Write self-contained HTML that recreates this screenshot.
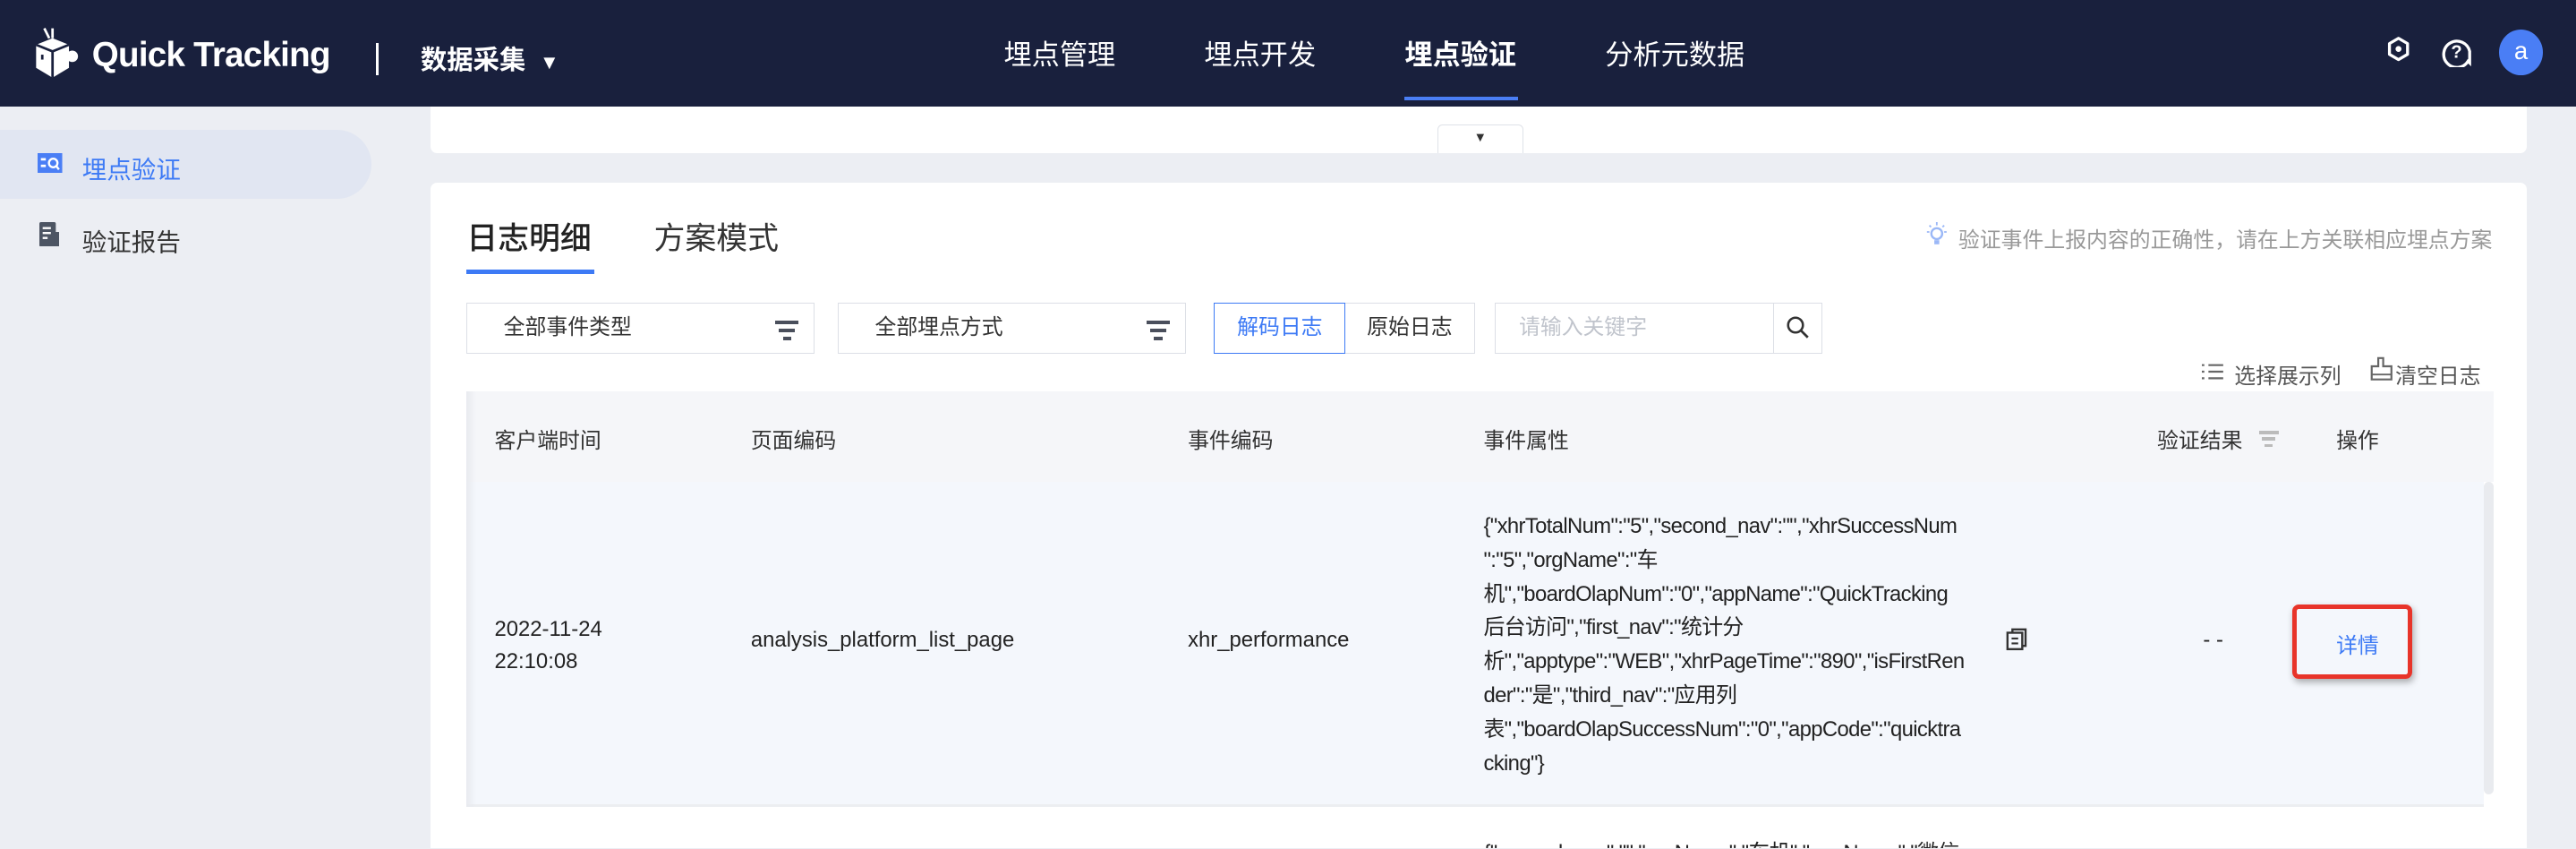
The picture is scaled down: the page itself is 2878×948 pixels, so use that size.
<!DOCTYPE html>
<html><head><meta charset="utf-8"><style>
*{box-sizing:border-box;margin:0;padding:0}
html,body{width:2878px;height:948px;overflow:hidden;background:#eceef3}
#r{zoom:1.8355;width:1568px;height:516px;position:relative;font-family:"Liberation Sans","Noto Sans CJK SC",sans-serif;color:#333;overflow:hidden}
.a{position:absolute;white-space:nowrap}
.hdr{left:0;top:0;width:1568px;height:65px;background:#19203d}
.nav{top:23px;font-size:17px;color:#fff;line-height:22px}
.card{background:#fff;border-radius:4px}
.sel{border:1px solid #dcdfe6;height:31px;background:#fff;font-size:13px;line-height:29px;color:#333}
.th{font-size:13px;color:#333;top:257px}
.td{font-size:13px;color:#222}
.filt{position:absolute;width:14px}
.filt i{display:block;height:2px;background:#4a4f5c;margin:0 auto 3px}
</style></head><body><div id="r">
<div class="a hdr"></div>
<svg class="a" style="left:18px;top:15px" width="30" height="34" viewBox="0 0 30 34"><path d="M9 2 L12 8 M14 2 L14 8" stroke="#fff" stroke-width="1.5" fill="none"/><path d="M4 12 L14 8 L24 12 L24 26 L14 32 L4 26Z" fill="#fff"/><path d="M4 12 L14 16 L24 12 M14 16 L14 32" stroke="#19203d" stroke-width="1.5" fill="none"/><rect x="7" y="18" width="1.5" height="3" fill="#19203d"/><circle cx="26" cy="19" r="3.5" fill="#fff"/></svg>
<div class="a" style="left:56px;top:22px;font-size:21px;font-weight:bold;color:#fff;letter-spacing:-0.4px">Quick Tracking</div>
<div class="a" style="left:229px;top:26px;width:1.5px;height:20px;background:#fff"></div>
<div class="a" style="left:256px;top:24px;font-size:16px;color:#fff;font-weight:bold">数据采集 <span style="font-size:12px;margin-left:4px">▼</span></div>
<div class="a nav" style="left:611px">埋点管理</div>
<div class="a nav" style="left:733px">埋点开发</div>
<div class="a nav" style="left:855px;font-weight:bold">埋点验证</div>
<div class="a" style="left:855px;top:59px;width:69px;height:2px;background:#4a7ef5"></div>
<div class="a nav" style="left:977px">分析元数据</div>
<svg class="a" style="left:1452px;top:22px" width="16" height="18" viewBox="0 0 16 18"><path d="M8 1.5 L13.5 4.7 L13.5 11.3 L8 14.5 L2.5 11.3 L2.5 4.7Z" fill="none" stroke="#fff" stroke-width="1.8" stroke-linejoin="round"/><circle cx="8" cy="8" r="1.8" fill="#fff"/></svg>
<svg class="a" style="left:1486px;top:21px" width="20" height="20" viewBox="0 0 20 20"><path d="M16 16 A8 8 0 1 1 17 10 L17 17Z" fill="none" stroke="#fff" stroke-width="1.8"/><text x="9" y="14" font-size="11" font-weight="bold" fill="#fff" text-anchor="middle" font-family="Liberation Sans">?</text></svg>
<div class="a" style="left:1521px;top:18px;width:27px;height:28px;border-radius:50%;background:#4a7ef5;color:#fff;font-size:15px;text-align:center;line-height:26px">a</div>
<div class="a" style="left:0;top:65px;width:234px;height:451px;background:#eceef3"></div>
<div class="a" style="left:0;top:79px;width:226px;height:42px;background:#e1e6f2;border-radius:0 21px 21px 0"></div>
<svg class="a" style="left:23px;top:93px" width="15" height="12" viewBox="0 0 15 12"><rect width="15" height="12" fill="#4a7ef5"/><rect x="2" y="3" width="3" height="1.5" fill="#fff"/><rect x="2" y="7" width="3" height="1.5" fill="#fff"/><circle cx="9.5" cy="6" r="2.6" fill="none" stroke="#fff" stroke-width="1.3"/><path d="M11.5 8 L13 10" stroke="#fff" stroke-width="1.3"/></svg>
<div class="a" style="left:50px;top:91px;font-size:15px;color:#3d7af5">埋点验证</div>
<svg class="a" style="left:24px;top:135px" width="12" height="15" viewBox="0 0 12 15"><rect width="10" height="15" rx="1" fill="#4d5563"/><rect x="9" y="6" width="3" height="9" fill="#4d5563"/><rect x="2" y="3" width="5" height="1.3" fill="#fff"/><rect x="2" y="6" width="5" height="1.3" fill="#fff"/><rect x="2" y="9" width="3" height="1.3" fill="#fff"/></svg>
<div class="a" style="left:50px;top:135px;font-size:15px;color:#333">验证报告</div>
<div class="a card" style="left:262px;top:65px;width:1276px;height:28px;border-radius:0 0 4px 4px"></div>
<div class="a" style="left:875px;top:76px;width:52px;height:17px;background:#fff;border:1px solid #dfe2e8;border-bottom:none;border-radius:3px 3px 0 0;font-size:8px;text-align:center;line-height:16px;color:#333">▼</div>
<div class="a card" style="left:262px;top:111px;width:1276px;height:420px"></div>
<div class="a" style="left:284px;top:130px;font-size:19px;color:#222;font-weight:500">日志明细</div>
<div class="a" style="left:284px;top:164px;width:78px;height:2.5px;background:#3d7af5"></div>
<div class="a" style="left:398px;top:130px;font-size:19px;color:#333">方案模式</div>
<svg class="a" style="left:1172px;top:135px" width="14" height="16" viewBox="0 0 14 16"><circle cx="7" cy="7" r="3.3" fill="none" stroke="#9bb8f7" stroke-width="1.3"/><rect x="5.5" y="11" width="3" height="2.5" fill="#9bb8f7"/><path d="M7 0v2M1 6h1.5M11.5 6h1.5M2.5 2l1 1M11.5 2l-1 1" stroke="#9bb8f7" stroke-width="1"/></svg>
<div class="a" style="left:1192px;top:135px;font-size:13px;color:#999">验证事件上报内容的正确性，请在上方关联相应埋点方案</div>
<div class="a sel" style="left:284px;top:184px;width:212px;padding-left:22px">全部事件类型</div>
<div class="filt" style="left:472px;top:195px"><i style="width:14px"></i><i style="width:10px"></i><i style="width:5px"></i></div>
<div class="a sel" style="left:510px;top:184px;width:212px;padding-left:22px">全部埋点方式</div>
<div class="filt" style="left:698px;top:195px"><i style="width:14px"></i><i style="width:10px"></i><i style="width:5px"></i></div>
<div class="a sel" style="left:739px;top:184px;width:80px;border-color:#3d7af5;color:#3d7af5;text-align:center;z-index:2">解码日志</div>
<div class="a sel" style="left:818px;top:184px;width:80px;text-align:center">原始日志</div>
<div class="a sel" style="left:910px;top:184px;width:170px;padding-left:14px;color:#c0c4cc">请输入关键字</div>
<div class="a sel" style="left:1079px;top:184px;width:30px"></div>
<svg class="a" style="left:1087px;top:192px" width="15" height="15" viewBox="0 0 15 15"><circle cx="6" cy="6" r="4.5" fill="none" stroke="#333" stroke-width="1.4"/><path d="M9.5 9.5 L13.5 13.5" stroke="#333" stroke-width="1.5"/></svg>
<svg class="a" style="left:1340px;top:220px" width="14" height="12" viewBox="0 0 14 12"><path d="M0 2h1.5M0 6h1.5M0 10h1.5M4 2h9M4 6h9M4 10h9" stroke="#666" stroke-width="1.2"/></svg>
<div class="a" style="left:1360px;top:218px;font-size:13px;color:#555">选择展示列</div>
<svg class="a" style="left:1442px;top:217px" width="15" height="15" viewBox="0 0 15 15"><path d="M5.5 1h3v5h5v8h-12v-8h4Z" fill="none" stroke="#666" stroke-width="1.2"/><path d="M1.5 11h12" stroke="#666" stroke-width="1"/></svg>
<div class="a" style="left:1458px;top:218px;font-size:13px;color:#555">清空日志</div>
<div class="a" style="left:284px;top:238px;width:1234px;height:55px;background:#f5f6f9"></div>
<div class="a" style="left:284px;top:293px;width:1228px;height:198px;background:#f4f7fc;border-bottom:2px solid #eceef1"></div>
<div class="a" style="left:284px;top:238px;width:6px;height:253px;background:linear-gradient(90deg,#e8eaef,rgba(244,247,252,0))"></div>
<div class="a th" style="left:301px">客户端时间</div>
<div class="a th" style="left:457px">页面编码</div>
<div class="a th" style="left:723px">事件编码</div>
<div class="a th" style="left:903px">事件属性</div>
<div class="a th" style="left:1313px">验证结果</div>
<div class="filt" style="left:1374px;top:262px"><i style="width:12px;background:#bbb;margin-bottom:2px"></i><i style="width:8px;background:#bbb;margin-bottom:2px"></i><i style="width:5px;background:#bbb"></i></div>
<div class="a th" style="left:1422px">操作</div>
<div class="a td" style="left:301px;top:373px;line-height:20px">2022-11-24<br>22:10:08</div>
<div class="a td" style="left:457px;top:382px">analysis_platform_list_page</div>
<div class="a td" style="left:723px;top:382px">xhr_performance</div>
<div class="a td" style="left:903px;top:310px;line-height:20.6px;font-size:13px;letter-spacing:-0.35px;color:#222">{"xhrTotalNum":"5","second_nav":"","xhrSuccessNum<br>":"5","orgName":"车<br>机","boardOlapNum":"0","appName":"QuickTracking<br>后台访问","first_nav":"统计分<br>析","apptype":"WEB","xhrPageTime":"890","isFirstRen<br>der":"是","third_nav":"应用列<br>表","boardOlapSuccessNum":"0","appCode":"quicktra<br>cking"}</div>
<svg class="a" style="left:1221px;top:382px" width="14" height="14" viewBox="0 0 14 14"><rect x="1" y="3" width="9" height="10" fill="none" stroke="#333" stroke-width="1.3"/><path d="M4 3V1h8v10h-2" fill="none" stroke="#333" stroke-width="1.3"/><path d="M3.5 6.5h4M3.5 9.5h4" stroke="#333" stroke-width="1.2"/></svg>
<div class="a td" style="left:1341px;top:382px">- -</div>
<div class="a" style="left:1395px;top:368px;width:73px;height:45px;border:3px solid #e8342a;border-radius:4px;box-shadow:1px 2px 4px rgba(0,0,0,.3)"></div>
<div class="a" style="left:1422px;top:382px;font-size:13px;color:#3d7af5">详情</div>
<div class="a" style="left:1512px;top:293px;width:6px;height:190px;background:#e9ebef;border-radius:3px"></div>
<div class="a td" style="left:903px;top:508px;letter-spacing:-0.35px">{"second_nav":"","orgName":"车机","appName":"微信</div>
</div></body></html>
